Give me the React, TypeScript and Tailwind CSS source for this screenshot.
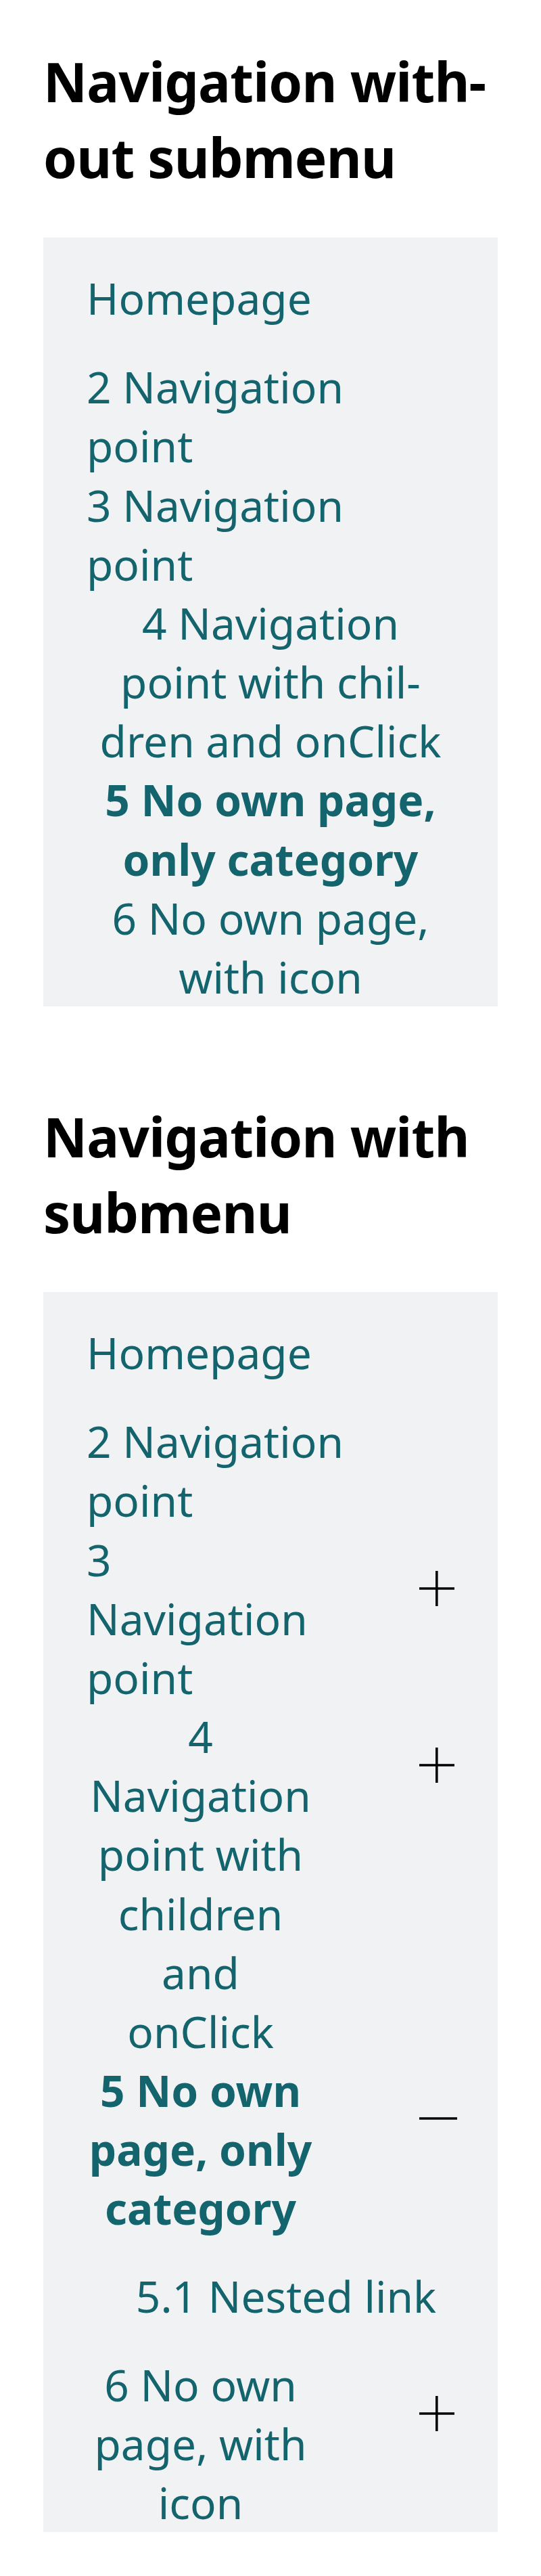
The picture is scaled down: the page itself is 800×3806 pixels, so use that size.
import React from "react";

const PlusIcon = () => (
  <svg width="52" height="52" viewBox="0 0 52 52" className="block" fill="none">
    <line x1="25.8" y1="0" x2="25.8" y2="52" stroke="#000" strokeWidth="3.6" />
    <line x1="0" y1="26" x2="52" y2="26" stroke="#000" strokeWidth="3.6" />
  </svg>
);

const MinusIcon = () => (
  <svg width="56" height="52" viewBox="0 0 56 52" className="block max-w-none" fill="none">
    <line x1="0" y1="25" x2="56" y2="25" stroke="#000" strokeWidth="3.4" />
  </svg>
);

function Row({
  children,
  icon,
  center,
  bold,
}: {
  children: React.ReactNode;
  icon: "plus" | "minus";
  center?: boolean;
  bold?: boolean;
}) {
  return (
    <div className="flex justify-between">
      <div className={`w-[337px] ${center ? "text-center" : "text-left"} ${bold ? "font-bold" : ""}`}>{children}</div>
      <div className="w-[52px] shrink-0 pt-[60px]">{icon === "plus" ? <PlusIcon /> : <MinusIcon />}</div>
    </div>
  );
}

export default function App() {
  return (
    <div lang="en" className="bg-white p-16 font-['Noto_Sans','Open_Sans',sans-serif] text-black">
      <h2 className="text-[80px] leading-[112px] tracking-[-0.8px] font-bold mb-[63px]">Navigation with{"\u00AD"}out submenu</h2>
      <nav className="bg-[#f1f2f4] pt-[46px] px-16 text-[64px] leading-[87.17px] text-[#14646e]">
        <div className="mb-[44px]">Homepage</div>
        <div>2 Navigation point</div>
        <div>3 Navigation point</div>
        <div className="text-center">4 Navigation point with chil{"\u00AD"}dren and onClick</div>
        <div className="text-center font-bold">5 No own page, only category</div>
        <div className="text-center">6 No own page, with icon</div>
      </nav>

      <h2 className="mt-[136px] text-[80px] leading-[112px] tracking-[-0.8px] font-bold mb-[62px]">Navigation with submenu</h2>
      <nav className="bg-[#f1f2f4] pt-[46px] px-16 text-[64px] leading-[87.17px] text-[#14646e]">
        <div className="mb-[44px]">Homepage</div>
        <div>2 Navigation point</div>
        <Row icon="plus">3 Navigation point</Row>
        <Row icon="plus" center>
          4 Navigation point with children and onClick
        </Row>
        <Row icon="minus" center bold>
          5 No own page, only category
        </Row>
        <div className="pl-[46px] text-center mt-[42px] mb-[44px]">5.1 Nested link</div>
        <Row icon="plus" center>
          6 No own page, with icon
        </Row>
      </nav>
    </div>
  );
}
